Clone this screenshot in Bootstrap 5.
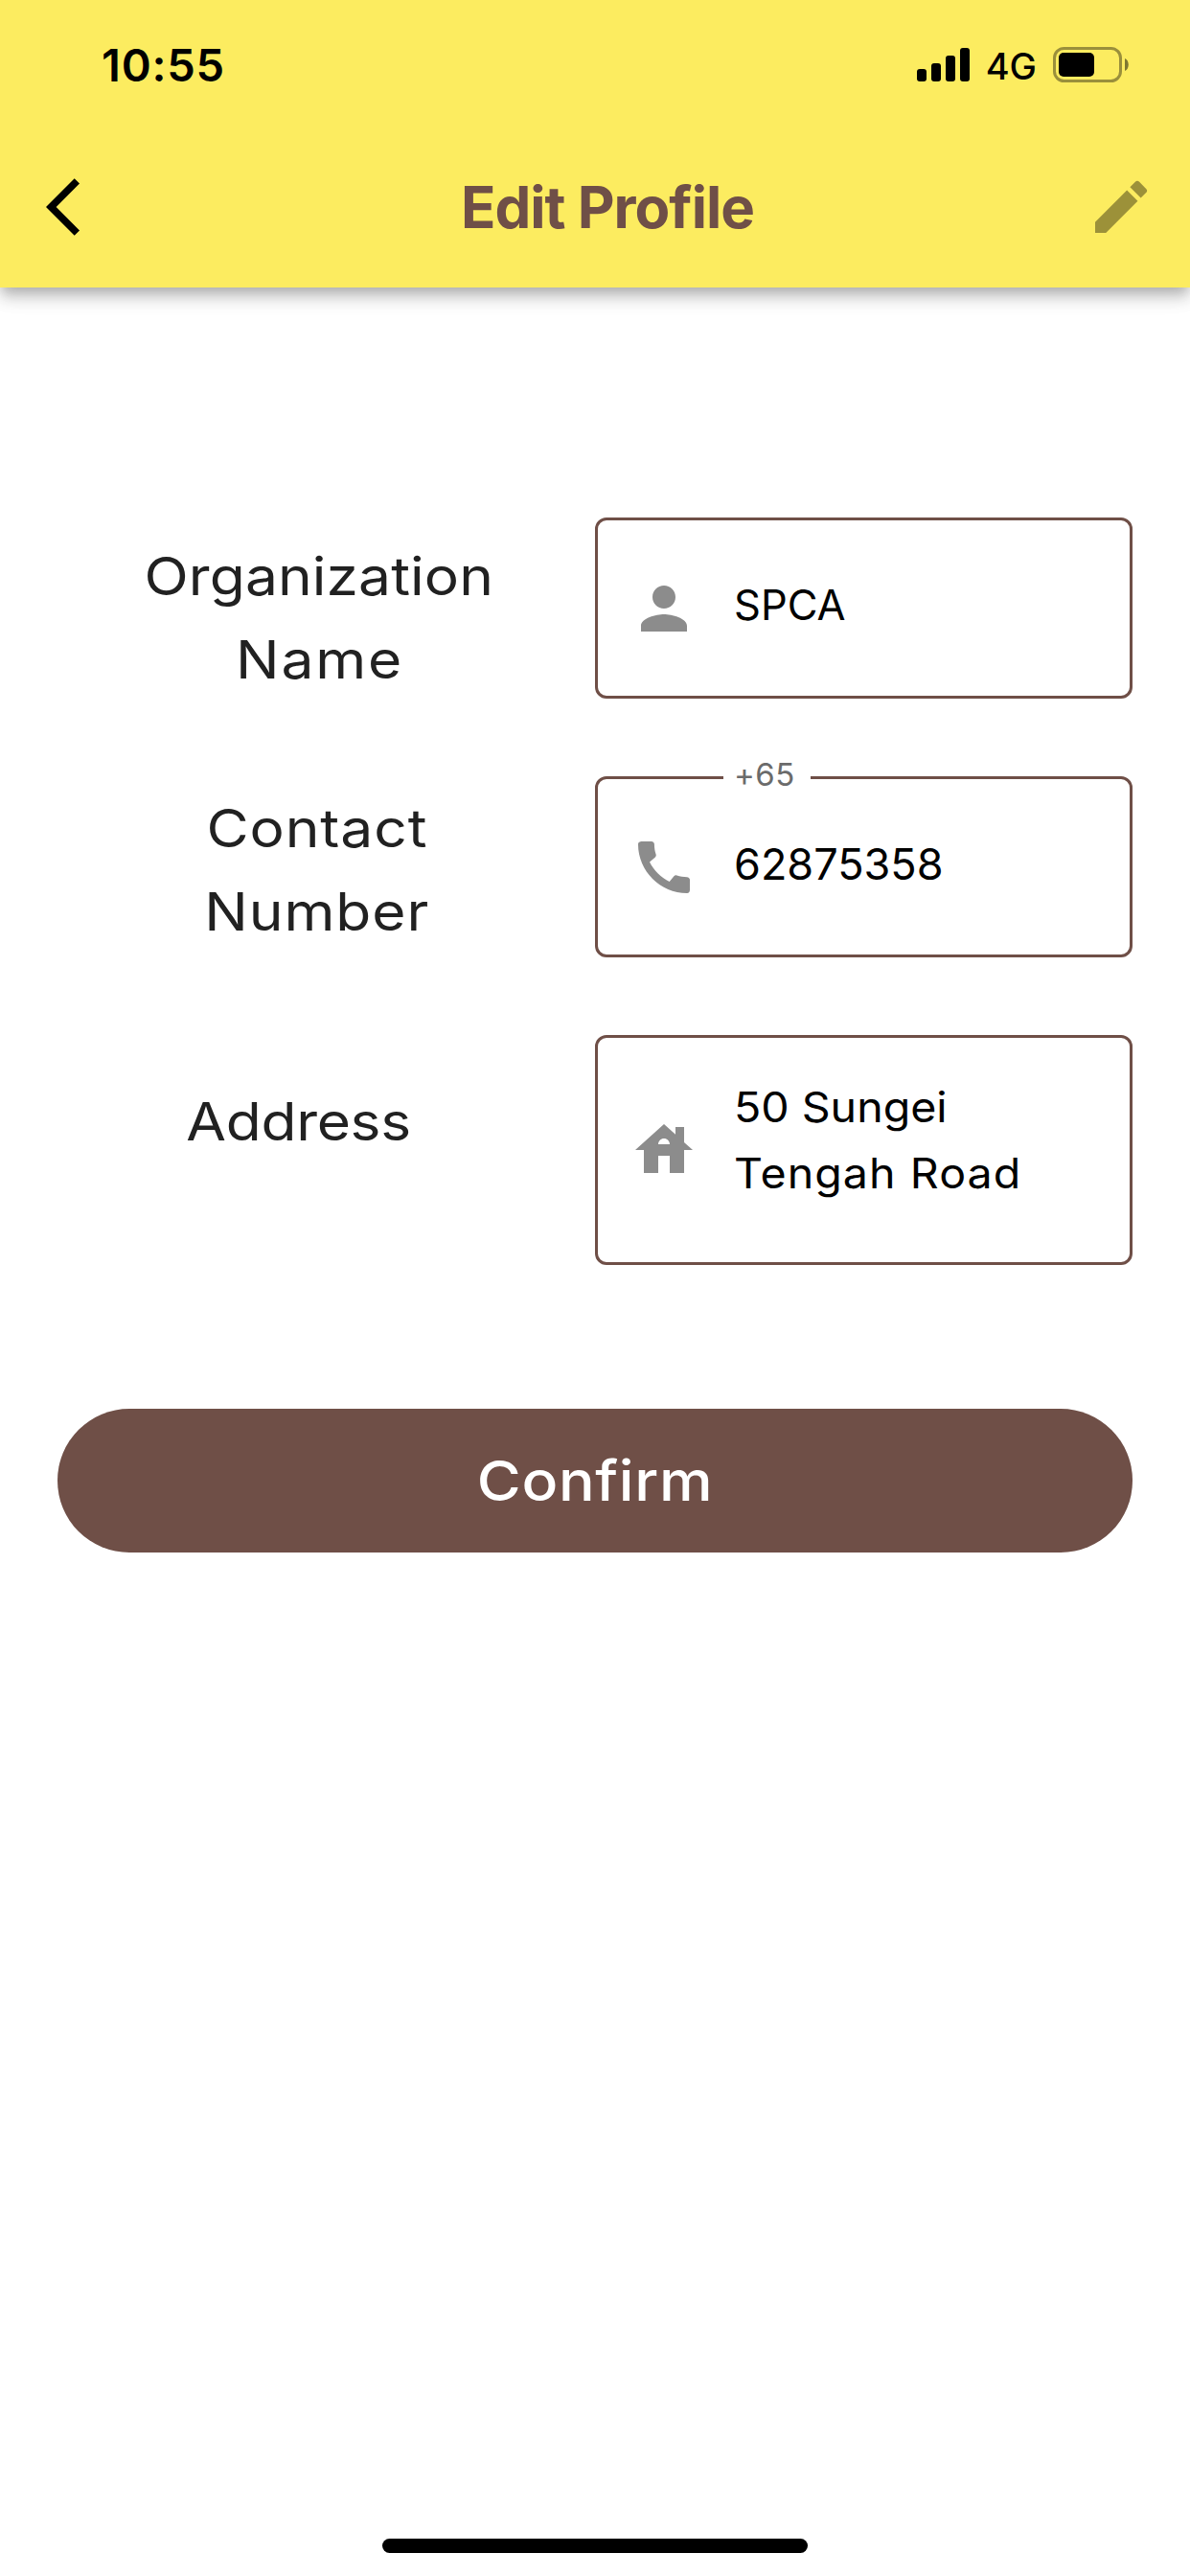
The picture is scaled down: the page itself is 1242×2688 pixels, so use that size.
<!DOCTYPE html>
<html lang="en">
<head>
<meta charset="utf-8">
<meta name="viewport" content="width=device-width, initial-scale=1">
<title>Edit Profile</title>
<link href="https://cdn.jsdelivr.net/npm/bootstrap@5.3.0/dist/css/bootstrap.min.css" rel="stylesheet">
<style>
  body { font-family: Inter, "Open Sans", sans-serif; color: #212121; background: #fff; }
  .screen { height: 2688px; overflow: hidden; }
  .app-header { height: 300px; background: #fcec60; box-shadow: 0 6px 12px -3px rgba(0,0,0,.2), 0 12px 15px rgba(0,0,0,.14), 0 3px 30px rgba(0,0,0,.08); }
  .status-bar { height: 135px; padding: 0 64px 0 106px; color: #000; }
  .clock { font-size: 47px; font-weight: 600; line-height: 135px; letter-spacing: .8px; }
  .network { font-size: 38px; font-weight: 500; line-height: 132px; margin: 0 17px 0 16px; padding-top: 3px; }
  .title-bar { height: 162px; padding: 0 36px 0 48px; }
  .page-title { font-size: 60px; font-weight: 700; line-height: 162px; padding-left: 14px; letter-spacing: -1px; color: #6f4f47; }
  .profile-form { padding: 240px 60px 0; }
  .field-row { height: 189px; margin-bottom: 81px; }
  .field-label { font-size: 55px; line-height: 87px; }
  .field-label span { display: inline-block; transform: scaleX(1.1); }
  .lbl-name { padding: 18px 15px 0 0; letter-spacing: .1px; }
  .lbl-name .name-word { letter-spacing: 1.6px; }
  .lbl-phone { padding: 11px 19px 0 0; letter-spacing: .8px; }
  .lbl-address { padding: 47px 57px 0 0; letter-spacing: -.3px; }
  .field-box { height: 189px; border: 3px solid #6f4f47; border-radius: 12px; padding-left: 33px; color: #000; }
  .field-box.tall { height: 240px; }
  .field-box svg { margin-right: 37px; fill: #8c8c8c; }
  .field-text { font-size: 43.5px; line-height: 69px; padding-bottom: 6px; }
  .tall .field-text { padding-bottom: 21px; transform: scaleX(1.07); transform-origin: left; }
  .tall .road { letter-spacing: 1px; }
  .field-text.digits { font-size: 45px; }
  .prefix { left: 131px; top: -25px; width: 91px; padding-left: 11px; background: #fff; color: #6b6b6b; font-size: 33px; line-height: 40px; letter-spacing: .5px; }
  .btn-confirm { height: 150px; margin-top: 150px; background: #6f4f47; color: #fff; font-size: 58px; font-weight: 500; letter-spacing: .6px; }
  .btn-confirm span { display: inline-block; transform: scaleX(1.08); }
  .home-bar { width: 444px; height: 15px; margin-bottom: 24px; background: #000; }
</style>
</head>
<body>
<div class="screen d-flex flex-column">
  <header class="app-header flex-shrink-0">
    <div class="status-bar d-flex align-items-center justify-content-between">
      <span class="clock">10:55</span>
      <div class="d-flex align-items-center">
        <svg width="56" height="37" viewBox="0 0 56 37"><rect x="0" y="23" width="10" height="13" rx="3"/><rect x="15" y="17" width="10" height="19" rx="3"/><rect x="30" y="9" width="10" height="27" rx="3"/><rect x="45" y="1" width="10" height="35" rx="3"/></svg>
        <span class="network">4G</span>
        <svg width="79" height="37" viewBox="0 0 79 37"><rect x="1.5" y="1.5" width="69" height="34" rx="10" fill="none" stroke="#9a8f3b" stroke-width="3"/><rect x="6" y="6" width="37" height="25" rx="5"/><path d="M75 12c5 2 5 11 0 13z" fill="#7f7831"/></svg>
      </div>
    </div>
    <div class="title-bar d-flex align-items-center justify-content-between">
      <svg width="72" height="72" viewBox="0 0 24 24"><path d="M11.67 3.87 9.9 2.1 0 12l9.9 9.9 1.77-1.77L3.54 12z"/></svg>
      <h1 class="page-title mb-0">Edit Profile</h1>
      <svg width="72" height="72" viewBox="0 0 24 24" fill="#9c9139"><path d="M3 17.25V21h3.75L17.81 9.94l-3.75-3.75L3 17.25zM20.71 7.04a1 1 0 0 0 0-1.41l-2.34-2.34a1 1 0 0 0-1.41 0l-1.83 1.83 3.75 3.75 1.83-1.83z"/></svg>
    </div>
  </header>

  <main class="profile-form flex-grow-1">
    <div class="row g-0 field-row">
      <div class="col-6 field-label lbl-name text-center"><span>Organization</span><br><span class="name-word">Name</span></div>
      <div class="col-6"><div class="field-box d-flex align-items-center">
        <svg width="72" height="72" viewBox="0 0 24 24"><path d="M12 12c2.21 0 4-1.79 4-4s-1.79-4-4-4-4 1.79-4 4 1.79 4 4 4zm0 2c-2.67 0-8 1.34-8 4v2h16v-2c0-2.66-5.33-4-8-4z"/></svg>
        <div class="field-text">SPCA</div>
      </div></div>
    </div>
    <div class="row g-0 field-row">
      <div class="col-6 field-label lbl-phone text-center"><span>Contact</span><br><span>Number</span></div>
      <div class="col-6"><div class="field-box d-flex align-items-center position-relative">
        <span class="prefix position-absolute">+65</span>
        <svg width="72" height="72" viewBox="0 0 24 24"><path d="M20.01 15.38c-1.23 0-2.42-.2-3.53-.56a.977.977 0 0 0-1.01.24l-1.57 1.97c-2.83-1.35-5.48-3.9-6.89-6.83l1.95-1.66c.27-.28.35-.67.24-1.02-.37-1.11-.56-2.3-.56-3.53 0-.54-.45-.99-.99-.99H4.19C3.65 3 3 3.24 3 3.99 3 13.28 10.73 21 20.01 21c.71 0 .99-.63.99-1.18v-3.45c0-.54-.45-.99-.99-.99z"/></svg>
        <div class="field-text digits">62875358</div>
      </div></div>
    </div>
    <div class="row g-0">
      <div class="col-6 field-label lbl-address text-center"><span>Address</span></div>
      <div class="col-6"><div class="field-box tall d-flex align-items-center">
        <svg width="72" height="72" viewBox="0 0 24 24"><path d="M19 9.3V4h-3v2.6L12 3 2 12h3v8h5v-6h4v6h5v-8h3l-3-2.7zm-9 .7c0-1.1.9-2 2-2s2 .9 2 2h-4z"/></svg>
        <div class="field-text">50 Sungei<br><span class="road">Tengah Road</span></div>
      </div></div>
    </div>
    <button type="button" class="btn btn-confirm rounded-pill w-100"><span>Confirm</span></button>
  </main>
  <div class="home-bar rounded-pill mx-auto flex-shrink-0"></div>
</div>
<script src="https://cdn.jsdelivr.net/npm/bootstrap@5.3.0/dist/js/bootstrap.bundle.min.js"></script>
</body>
</html>
